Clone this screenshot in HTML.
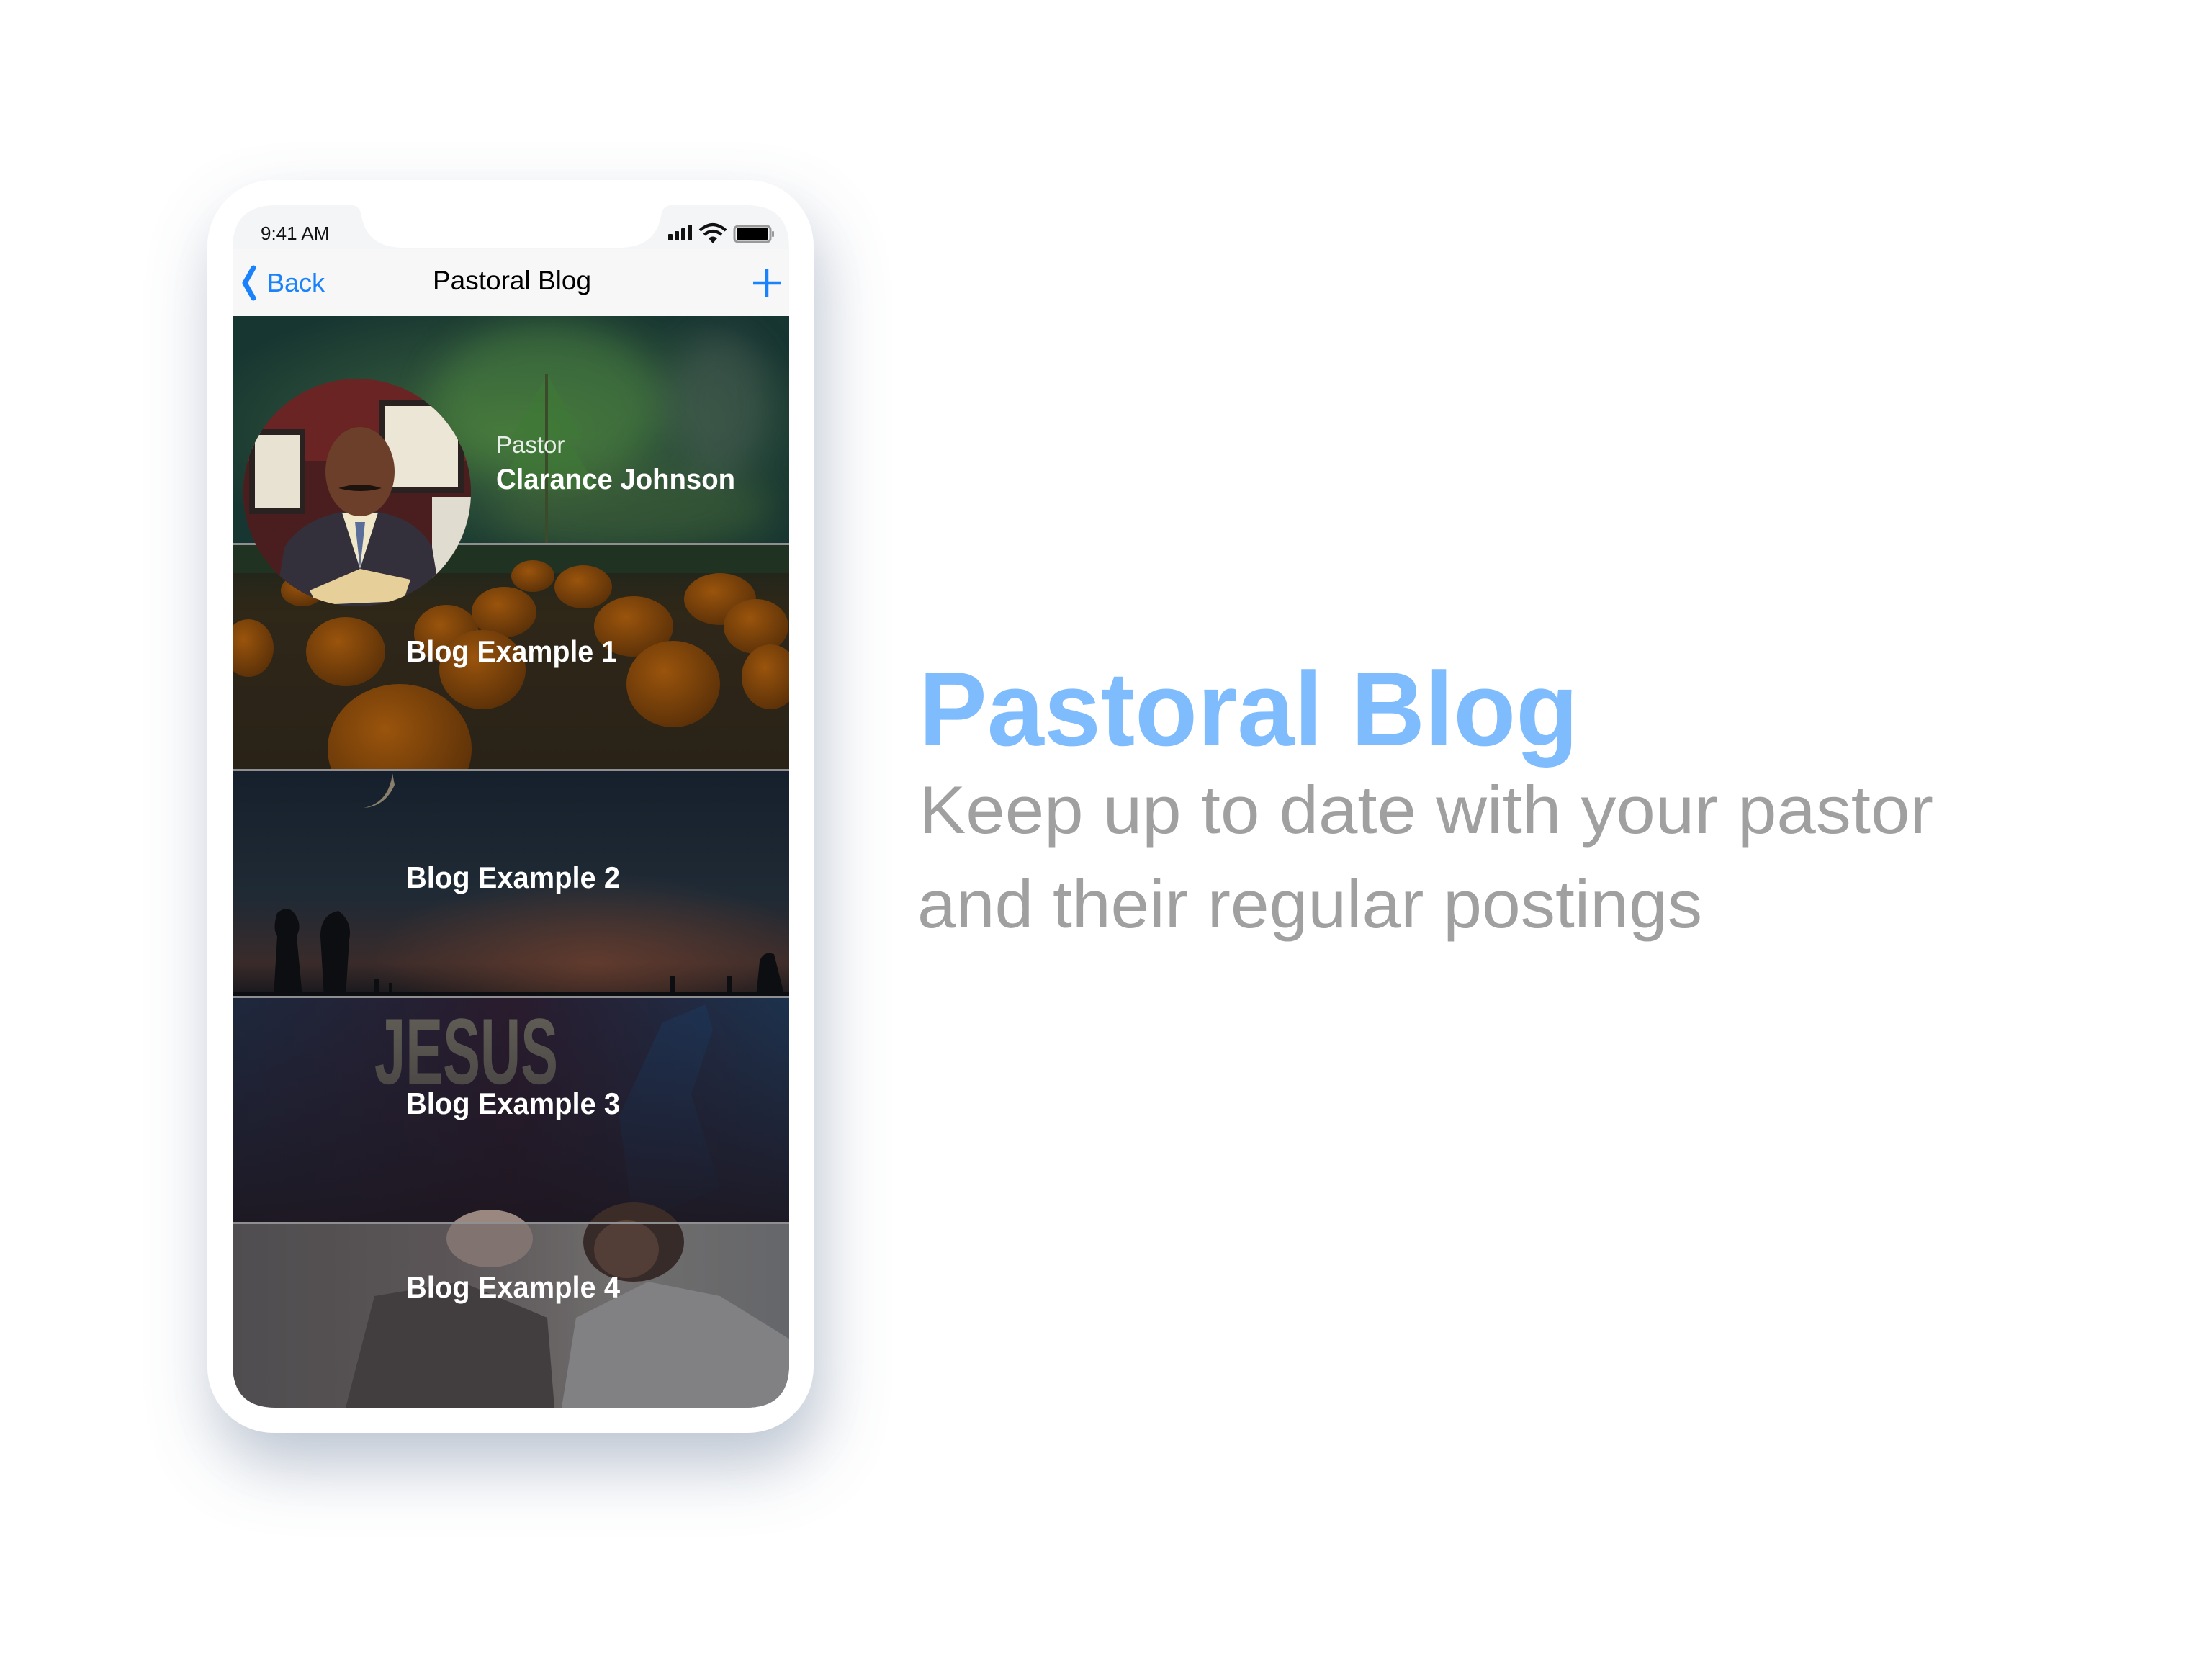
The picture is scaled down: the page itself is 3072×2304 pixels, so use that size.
<!DOCTYPE html>
<html><head><meta charset="utf-8"><style>
html,body{margin:0;padding:0;background:#fff;}
svg{display:block;}
</style></head><body>
<svg width="3072" height="2304" viewBox="0 0 3072 2304" xmlns="http://www.w3.org/2000/svg">
<defs>
  <filter id="sh" x="-30%" y="-20%" width="160%" height="150%">
    <feGaussianBlur in="SourceAlpha" stdDeviation="45"/>
    <feOffset dx="10" dy="45" result="b"/>
    <feFlood flood-color="#6a7d99" flood-opacity="0.45"/>
    <feComposite in2="b" operator="in"/>
    <feMerge><feMergeNode/><feMergeNode in="SourceGraphic"/></feMerge>
  </filter>
  <filter id="blur"><feGaussianBlur stdDeviation="25"/></filter>
  <clipPath id="scr">
    <path d="M383 285 H488 Q500 285 502 300 Q510 344 560 344 H860 Q910 344 918 300 Q920 285 932 285 H1037 Q1096 285 1096 345 V1895 Q1096 1955 1036 1955 H383 Q323 1955 323 1895 V345 Q323 285 383 285 Z"/>
  </clipPath>
  <clipPath id="av"><circle cx="496" cy="684" r="158"/></clipPath>
  <clipPath id="r1"><rect x="323" y="439" width="774" height="317"/></clipPath>
  <radialGradient id="g1" cx="0.5" cy="0.5" r="0.6">
    <stop offset="0" stop-color="#3f6a38"/><stop offset="0.5" stop-color="#2a4d38"/><stop offset="1" stop-color="#173531"/>
  </radialGradient>
  <linearGradient id="g2" x1="0" y1="0" x2="0" y2="1">
    <stop offset="0" stop-color="#1c261d"/><stop offset="0.3" stop-color="#2f2718"/><stop offset="1" stop-color="#292217"/>
  </linearGradient>
  <linearGradient id="g3" x1="0" y1="0" x2="0" y2="1">
    <stop offset="0" stop-color="#16202c"/><stop offset="0.55" stop-color="#1f2a35"/><stop offset="0.85" stop-color="#3a2b2a"/><stop offset="1" stop-color="#16171c"/>
  </linearGradient>
  <radialGradient id="g3b" cx="0.65" cy="0.85" r="0.4">
    <stop offset="0" stop-color="#7a4530" stop-opacity="0.6"/><stop offset="1" stop-color="#7a4530" stop-opacity="0"/>
  </radialGradient>
  <linearGradient id="g4" x1="0" y1="0" x2="1" y2="0">
    <stop offset="0" stop-color="#1e2a40"/><stop offset="0.5" stop-color="#2a1c2e"/><stop offset="1" stop-color="#1c3552"/>
  </linearGradient>
  <linearGradient id="g4b" x1="0" y1="0" x2="0" y2="1">
    <stop offset="0" stop-color="#201826" stop-opacity="0.1"/><stop offset="1" stop-color="#1d1720" stop-opacity="0.9"/>
  </linearGradient>
  <linearGradient id="g5" x1="0" y1="0" x2="1" y2="0">
    <stop offset="0" stop-color="#5a5858"/><stop offset="0.4" stop-color="#6a6262"/><stop offset="0.7" stop-color="#85827f"/><stop offset="1" stop-color="#76787a"/>
  </linearGradient>
  <radialGradient id="pk" cx="0.4" cy="0.35" r="0.7">
    <stop offset="0" stop-color="#9a540c"/><stop offset="1" stop-color="#5a3008"/>
  </radialGradient>
</defs>

<rect x="288" y="250" width="842" height="1740" rx="92" fill="#fff" filter="url(#sh)"/>

<g clip-path="url(#scr)">
  <rect x="323" y="285" width="774" height="1670" fill="#f4f5f7"/>
  <rect x="323" y="346" width="774" height="93" fill="#f7f7f8"/>
  <rect x="323" y="439" width="774" height="317" fill="url(#g1)"/>
  <g clip-path="url(#r1)">
    <g filter="url(#blur)" opacity="0.8">
      <ellipse cx="760" cy="560" rx="160" ry="110" fill="#4f8a40" opacity="0.6"/>
      <ellipse cx="880" cy="710" rx="200" ry="60" fill="#4a6a35" opacity="0.6"/>
      <ellipse cx="1000" cy="560" rx="70" ry="100" fill="#5a6a60" opacity="0.5"/>
    </g>
    <path d="M760 520 L710 610 L810 610 Z M760 560 L690 680 L830 680 Z" fill="#3e7a35" opacity="0.55"/>
    <rect x="757" y="520" width="4" height="236" fill="#3b4a2a"/>
  </g>
  <rect x="323" y="756" width="774" height="314" fill="url(#g2)"/>
  <rect x="323" y="756" width="774" height="40" fill="#203222"/>
  <g fill="url(#pk)">
    <ellipse cx="345" cy="900" rx="35" ry="40"/>
    <ellipse cx="480" cy="905" rx="55" ry="48"/>
    <ellipse cx="620" cy="880" rx="45" ry="40"/>
    <ellipse cx="700" cy="850" rx="45" ry="35"/>
    <ellipse cx="810" cy="815" rx="40" ry="30"/>
    <ellipse cx="880" cy="870" rx="55" ry="42"/>
    <ellipse cx="1000" cy="832" rx="50" ry="36"/>
    <ellipse cx="1050" cy="870" rx="45" ry="38"/>
    <ellipse cx="670" cy="930" rx="60" ry="55"/>
    <ellipse cx="935" cy="950" rx="65" ry="60"/>
    <ellipse cx="1070" cy="940" rx="40" ry="45"/>
    <ellipse cx="555" cy="1040" rx="100" ry="90"/>
    <ellipse cx="420" cy="820" rx="30" ry="22"/>
    <ellipse cx="740" cy="800" rx="30" ry="22"/>
  </g>
  <rect x="323" y="1070" width="774" height="315" fill="url(#g3)"/>
  <rect x="323" y="1070" width="774" height="315" fill="url(#g3b)"/>
  <path d="M545 1074 Q540 1115 505 1122 Q535 1120 548 1090 Z" fill="#b8a888" opacity="0.7"/>
  <g fill="#0c0e12">
    <path d="M380 1385 L385 1300 Q378 1290 385 1268 Q400 1255 410 1270 Q420 1285 412 1300 L420 1385 Z"/>
    <path d="M450 1385 L445 1300 Q445 1270 470 1265 Q490 1280 485 1305 L480 1385 Z"/>
    <rect x="323" y="1377" width="774" height="8"/>
    <path d="M1050 1385 L1055 1335 Q1060 1320 1075 1325 L1090 1385 Z"/>
    <rect x="520" y="1360" width="6" height="20"/><rect x="540" y="1365" width="5" height="15"/>
    <rect x="930" y="1355" width="8" height="25"/><rect x="1010" y="1355" width="7" height="25"/>
  </g>
  <rect x="323" y="1385" width="774" height="314" fill="url(#g4)"/>
  <path d="M920 1420 L980 1395 L990 1430 L960 1520 L1000 1650 L880 1699 L860 1550 Z" fill="#1a3c62" opacity="0.6"/>
  <text x="520" y="1505" font-family="Liberation Sans Narrow, Liberation Sans, sans-serif" font-weight="bold" font-size="130" fill="#6c6a5e" textLength="255" lengthAdjust="spacingAndGlyphs">JESUS</text>
  <rect x="323" y="1385" width="774" height="314" fill="url(#g4b)"/>
  <rect x="323" y="1699" width="774" height="256" fill="url(#g5)"/>
  <path d="M480 1955 L520 1800 L640 1780 L760 1830 L770 1955 Z" fill="#4a4444"/>
  <path d="M780 1955 L800 1830 L900 1780 L1000 1800 L1097 1860 V1955 Z" fill="#9a9a9c"/>
  <ellipse cx="680" cy="1720" rx="60" ry="40" fill="#9a8880"/>
  <ellipse cx="880" cy="1725" rx="70" ry="55" fill="#3c2c28"/>
  <ellipse cx="870" cy="1735" rx="45" ry="40" fill="#5e4438"/>
  <rect x="323" y="1699" width="774" height="256" fill="#2b2a30" opacity="0.22"/>
  <g fill="#8f8f92">
    <rect x="323" y="754" width="774" height="3"/>
    <rect x="323" y="1068" width="774" height="3"/>
    <rect x="323" y="1383" width="774" height="3"/>
    <rect x="323" y="1697" width="774" height="3"/>
  </g>
  <g clip-path="url(#av)">
    <rect x="330" y="520" width="330" height="330" fill="#6b2424"/>
    <rect x="330" y="640" width="330" height="210" fill="#4a1e1e"/>
    <rect x="350" y="600" width="70" height="110" fill="#e8e2d2" stroke="#2a2220" stroke-width="8"/>
    <rect x="530" y="560" width="110" height="120" fill="#ece6d6" stroke="#2a2220" stroke-width="8"/>
    <rect x="600" y="690" width="60" height="120" fill="#e0dcd0"/>
    <path d="M380 850 L395 760 Q420 720 480 710 L520 710 Q580 720 600 760 L615 850 Z" fill="#33303c"/>
    <path d="M475 712 L500 790 L525 712 Z" fill="#f0e7c8"/>
    <path d="M493 725 L500 790 L507 725 Z" fill="#5b6e99"/>
    <ellipse cx="500" cy="655" rx="48" ry="62" fill="#6b3f2a"/>
    <path d="M470 678 Q500 668 530 678 Q500 686 470 678 Z" fill="#1c120e"/>
    <path d="M430 820 L500 790 L570 805 L560 835 L440 840 Z" fill="#e7cf9a"/>
  </g>
</g>

<text x="362" y="333" font-family="Liberation Sans, sans-serif" font-size="26" fill="#111">9:41 AM</text>
<g fill="#111">
  <rect x="928" y="325" width="6" height="9" rx="1"/>
  <rect x="937" y="321" width="6" height="13" rx="1"/>
  <rect x="946" y="317" width="6" height="17" rx="1"/>
  <rect x="955" y="312" width="6" height="22" rx="1"/>
</g>
<path d="M972 320 Q990 304 1008 320" stroke="#111" stroke-width="4" fill="none"/>
<path d="M978 326 Q990 316 1002 326" stroke="#111" stroke-width="4" fill="none"/>
<path d="M984 331 L990 338 L996 331 Q990 326 984 331 Z" fill="#111"/>
<rect x="1020" y="314" width="50" height="22" rx="5" fill="none" stroke="#999" stroke-width="3"/>
<rect x="1023" y="317" width="44" height="16" rx="2" fill="#000"/>
<rect x="1072" y="321" width="3" height="8" rx="1" fill="#999"/>

<path d="M352 372 L340 393 L352 414" stroke="#1a82fb" stroke-width="7" fill="none" stroke-linecap="round" stroke-linejoin="round"/>
<text x="371" y="405" font-family="Liberation Sans, sans-serif" font-size="36" fill="#1a82fb">Back</text>
<text x="711" y="402" text-anchor="middle" font-family="Liberation Sans, sans-serif" font-size="37" fill="#000">Pastoral Blog</text>
<path d="M1065 374 V412 M1046 393 H1084" stroke="#1a82fb" stroke-width="4.5"/>

<g font-family="Liberation Sans, sans-serif" fill="#fff">
  <text x="689" y="629" font-size="33" fill="#e8efe8">Pastor</text>
  <text x="689" y="679" font-size="40" font-weight="bold" textLength="332" lengthAdjust="spacingAndGlyphs">Clarance Johnson</text>
  <text x="564" y="919" font-size="42" font-weight="bold" textLength="293" lengthAdjust="spacingAndGlyphs">Blog Example 1</text>
  <text x="564" y="1233" font-size="42" font-weight="bold" textLength="297" lengthAdjust="spacingAndGlyphs">Blog Example 2</text>
  <text x="564" y="1547" font-size="42" font-weight="bold" textLength="297" lengthAdjust="spacingAndGlyphs">Blog Example 3</text>
  <text x="564" y="1802" font-size="42" font-weight="bold" textLength="297" lengthAdjust="spacingAndGlyphs">Blog Example 4</text>
</g>

<text x="1276" y="1035" font-family="Liberation Sans, sans-serif" font-size="146" font-weight="bold" fill="#7fbcfd" textLength="916" lengthAdjust="spacingAndGlyphs">Pastoral Blog</text>
<text x="1276" y="1157" font-family="Liberation Sans, sans-serif" font-size="94" fill="#a0a0a0" textLength="1409" lengthAdjust="spacingAndGlyphs">Keep up to date with your pastor</text>
<text x="1274" y="1288" font-family="Liberation Sans, sans-serif" font-size="94" fill="#a0a0a0" textLength="1090" lengthAdjust="spacingAndGlyphs">and their regular postings</text>
</svg>
</body></html>
